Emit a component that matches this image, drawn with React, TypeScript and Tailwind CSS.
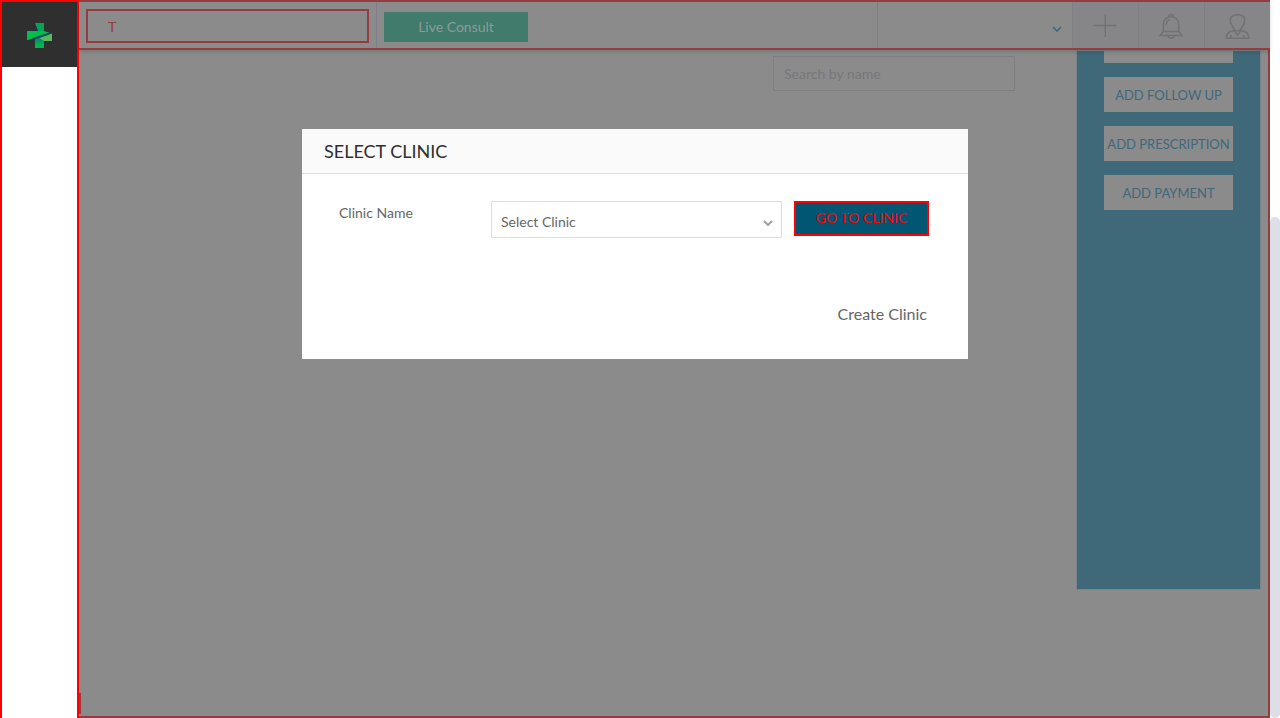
import type { ReactNode } from "react";

function Logo() {
  return (
    <svg width="25" height="25" viewBox="0 0 25 25" aria-hidden="true">
      <defs>
        <linearGradient id="stem" x1="0" y1="0" x2="0" y2="1">
          <stop offset="0" stopColor="#006f7c" />
          <stop offset="0.8" stopColor="#02b84c" />
        </linearGradient>
      </defs>
      <path d="M8 0h9v9l-6 1z" fill="#00a651" />
      <path d="M8 0l3.500 9-2-1z" fill="#20306f" />
      <path d="M0 8h17l6 2L2 17H0z" fill="#00c04b" />
      <path d="M8 15l9-3v13H8z" fill="url(#stem)" />
      <path d="M12 15l13-5v8H17z" fill="#5cb85c" />
      <path d="M25 9v1.500L12 15l-9 2.500L1 17l12-4.500z" fill="#173c70" />
    </svg>
  );
}

function Chevron({ className }: { className: string }) {
  return (
    <svg className={className} viewBox="0 0 10 6" fill="none" stroke="currentColor" aria-hidden="true">
      <path d="M1 1l4 4 4-4" />
    </svg>
  );
}

function PlusIcon() {
  return (
    <svg width="26" height="26" viewBox="0 0 26 26" fill="none" stroke="currentColor" strokeWidth="1.4" aria-hidden="true">
      <path d="M13.300 1v23M1.800 12.500h23" />
    </svg>
  );
}

function BellIcon() {
  return (
    <svg width="26" height="26" viewBox="0 0 26 26" fill="none" stroke="currentColor" strokeWidth="1.5" aria-hidden="true">
      <path d="M10.800 3.800a2.200 2.200 0 1 1 4.400 0" />
      <path d="M5.300 18v-6.500C5.300 7 8.500 3.800 13 3.800s7.700 3.200 7.700 7.700V18" />
      <path d="M5.300 18.500h15.400M5.300 18L2 22.500h22L20.700 18" />
      <path d="M10 22.700c.4 3.500 5.600 3.500 6 0M8.200 12c0-3 1.200-5 3.800-5.500" />
    </svg>
  );
}

function UserIcon() {
  return (
    <svg width="26" height="26" viewBox="0 0 26 26" fill="none" stroke="currentColor" strokeWidth="1.500" aria-hidden="true">
      <path d="M13.500 1.800C9 1.800 6.300 4 6.300 7.500c0 2 .7 3 1.700 5 .8 1.600 1.500 3.200 2.600 4.300v1.500l2.900 4 2.900-4v-1.500c1.100-1.100 1.800-2.700 2.600-4.300 1-2 1.700-3 1.700-5 0-3.500-2.700-5.700-7.200-5.700z" />
      <path d="M10.600 16.800c.9.800 1.800 1.200 2.900 1.200s2-.4 2.900-1.200" />
      <path d="M10.300 17.500C5.500 18 2.200 20 2.200 25.200h22.600c0-5.200-3.300-7.200-8.100-7.700" />
      <path d="M7 22v3M20 22v3" />
    </svg>
  );
}

function HeaderAction({ label, children }: { label: string; children: ReactNode }) {
  return (
    <button
      type="button"
      aria-label={label}
      className="flex w-[66px] justify-center border-l border-[#7f7f81] bg-[#868688] pt-[11px] pr-[2px] text-[#727274]"
    >
      {children}
    </button>
  );
}

function Header() {
  return (
    <header className="relative z-10 flex h-[50px] shrink-0 border-y-2 border-[#943c40] bg-[#8b8b8c] shadow-[0_2px_4px_rgba(0,0,0,0.15)]">
      <div className="flex w-[298px] shrink-0 items-start border-r border-[#7e7e8c] px-[7px] pt-[7px]">
        <input
          aria-label="Search"
          defaultValue="T"
          className="h-[34px] w-full border-2 border-[#943c40] px-5 text-sm text-[#943c40] outline-none"
        />
      </div>
      <div className="flex flex-1 items-start pt-[10px] pl-[7px]">
        <button type="button" className="h-[30px] w-36 bg-[#407b6c] text-sm text-[#8d9b98]">
          Live Consult
        </button>
      </div>
      <button
        type="button"
        aria-label="Choose clinic"
        className="flex w-[195px] items-center justify-end border-l border-[#7f7f81] pt-2 pr-[10px] text-[#326b7e]"
      >
        <Chevron className="h-[6px] w-[10px] stroke-[1.5]" />
      </button>
      <HeaderAction label="Add">
        <PlusIcon />
      </HeaderAction>
      <HeaderAction label="Notifications">
        <BellIcon />
      </HeaderAction>
      <HeaderAction label="Profile">
        <UserIcon />
      </HeaderAction>
    </header>
  );
}

const actions = ["ADD FOLLOW UP", "ADD PRESCRIPTION", "ADD PAYMENT"];

function SelectClinic() {
  return (
    <div className="fixed inset-x-0 top-[129px] z-20 flex justify-center pr-[10px]">
      <section role="dialog" aria-labelledby="dialog-title" className="w-[666px] bg-white pb-[33px]">
        <h2
          id="dialog-title"
          className="flex h-[45px] items-center border-b border-[#dedede] bg-[#fafafa] px-[22px] text-lg text-[#2f2f2f]"
        >
          SELECT CLINIC
        </h2>
        <form className="flex items-start pt-[27px] pr-[39px] pl-[37px] text-sm text-[#666]">
          <label htmlFor="clinic" className="w-[152px] pt-[2px]">
            Clinic Name
          </label>
          <div className="relative flex-1">
            <select
              id="clinic"
              className="block h-[37px] w-full appearance-none border border-[#dedede] bg-white px-[9px] pt-[5px] outline-none"
            >
              <option>Select Clinic</option>
            </select>
            <Chevron className="pointer-events-none absolute top-[19px] right-[9px] h-[6px] w-[10px] stroke-2 text-[#a0a0a0]" />
          </div>
          <button
            type="button"
            className="ml-3 h-[35px] w-[135px] border-2 border-[#ff0000] bg-[#005673] pb-[2px] text-sm text-[#ff0000]"
          >
            GO TO CLINIC
          </button>
        </form>
        <div className="flex justify-end pt-16 pr-[41px]">
          <a href="#create" className="text-base text-[#666]">
            Create Clinic
          </a>
        </div>
      </section>
    </div>
  );
}

export default function App() {
  return (
    <div className="flex h-screen overflow-hidden bg-white font-['Lato',sans-serif]">
      <nav aria-label="Main" className="w-[79px] shrink-0 border-2 border-b-0 border-[#ff0000] bg-white">
        <a href="#home" aria-label="Home" className="flex h-[65px] items-center justify-center bg-[#2f2f2f] pt-[2px]">
          <Logo />
        </a>
      </nav>
      <div className="flex min-w-0 flex-1 flex-col bg-[#8b8b8c]">
        <Header />
        <main className="flex flex-1 items-start justify-end border-r-2 border-b-2 border-[#943c40] pr-[7px]">
          <div className="mr-auto mb-[2px] h-[21px] w-[2px] self-end bg-[#943c40]" />
          <input
            aria-label="Search by name"
            placeholder="Search by name"
            className="mt-[6px] mr-[61px] h-[35px] w-[242px] border border-[#7f7f81] px-[10px] text-sm outline-none placeholder:text-[#777779]"
          />
          <aside className="flex h-[540px] w-[185px] flex-col items-center gap-[14px] border border-[#7c8487] bg-[#3f6878]">
            <div className="h-3 w-[129px] shrink-0 bg-[#8b8b8c]" />
            {actions.map((label) => (
              <button
                key={label}
                type="button"
                className="h-[35px] w-[129px] shrink-0 bg-[#8b8b8c] pt-[2px] text-[13px] whitespace-nowrap text-[#3f6878]"
              >
                {label}
              </button>
            ))}
          </aside>
        </main>
      </div>
      <div className="flex w-[10px] shrink-0 flex-col pt-[217px]">
        <div className="flex-1 rounded-full bg-[#dedee8]" />
      </div>
      <SelectClinic />
    </div>
  );
}
